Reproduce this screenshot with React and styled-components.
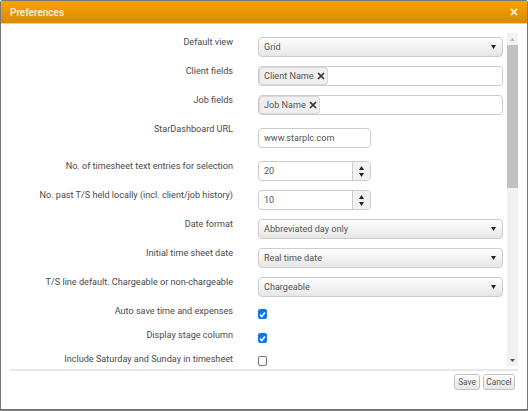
import React from "react";
import styled, { createGlobalStyle } from "styled-components";

const Global = createGlobalStyle`
  html, body { margin: 0; padding: 0; background: #fff; }
  body { width: 528px; height: 411px; overflow: hidden; font-family: Roboto, "Liberation Sans", sans-serif; }
  * { box-sizing: border-box; }
`;
const Dialog = styled.div`
  width: 528px; height: 411px; display: flex; flex-direction: column;
  background: #fff; border: 1px solid #777; border-bottom-width: 2px; border-radius: 3px 3px 0 0; overflow: hidden;
`;
const Title = styled.div`
  height: 23px; flex: none; display: flex; align-items: center; justify-content: space-between;
  padding: 0 9px; color: #fdf3e0; font-size: 10px; font-weight: 500;
  background: linear-gradient(#f8a200, #d98a00); border-bottom: 1px solid #d0d0d0;
`;
const Close = styled.svg`width: 8px; height: 8px; stroke: #fdecc8; stroke-width: 2; fill: none;`;
const Body = styled.div`
  height: 339px; flex: none; margin: 8px 9px 0 9px; display: flex; justify-content: space-between; align-items: flex-start;
  border-bottom: 2px solid #e8e8e8;
`;
const Form = styled.div`
  width: 493px; height: 335px; overflow: hidden; display: flex; flex-direction: column;
`;
const Row = styled.div`
  flex: none; height: ${p => p.$h}px; display: grid; grid-template-columns: 223px 1fr; column-gap: 25px;
  align-items: start; margin-top: ${p => p.$top || 0}px;
`;
const Label = styled.div`
  text-align: right; font-size: 9.1px; line-height: 10px; color: #4a4a4a; white-space: nowrap;
`;
const Select = styled.div`
  width: 245px; height: 20px; display: flex; align-items: center; justify-content: space-between;
  padding: 0 6px 0 5px; font-size: 9.1px; color: #555; border: 1px solid #ccc; border-radius: 4px;
  background: linear-gradient(#fff, #e6e6e6);
`;
const Caret = styled.svg`width: 5px; height: 4px; fill: #222; flex: none;`;
const TagBox = styled.div`
  width: 245px; height: 20px; display: flex; align-items: center; border: 1px solid #ccc; border-radius: 4px; background: #fff;
`;
const Tag = styled.div`
  height: 18px; display: flex; align-items: center; gap: 3px; padding: 0 3px 0 5px; font-size: 9.1px; color: #555;
  background: #efefef; border-radius: 4px; box-shadow: inset 0 0 0 1px #d8d8d8;
`;
const TagX = styled.svg`width: 8px; height: 8px; stroke: #333; stroke-width: 1.7; fill: none;`;
const TextBox = styled.div`
  width: 113px; height: 20px; margin-top: 4px; display: flex; align-items: center; padding: 0 5px; font-size: 9.1px; color: #555;
  border: 1px solid #ccc; border-radius: 4px; background: #fff;
`;
const Spin = styled.div`
  width: 113px; height: 20px; display: flex; border: 1px solid #ccc; border-radius: 4px; overflow: hidden; font-size: 9.1px; color: #555; background: #fff;
`;
const SpinValue = styled.div`flex: 1; display: flex; align-items: center; padding-left: 5px;`;
const SpinButtons = styled.div`
  width: 18px; display: flex; flex-direction: column; align-items: center; justify-content: center; gap: 3px;
  border-left: 1px solid #ccc; background: #f2f2f2;
`;
const Check = styled.div`
  width: 9px; height: 10px; margin-top: ${p => p.$top}px; border-radius: 2px; display: flex; align-items: center; justify-content: center;
  background: ${p => (p.$on ? "#0a76f0" : "#fff")}; border: 1px solid ${p => (p.$on ? "#0a76f0" : "#777")};
`;
const Tick = styled.svg`width: 7px; height: 7px; stroke: #fff; stroke-width: 1.6; fill: none;`;
const Track = styled.div`
  width: 11px; height: 333px; margin-top: 1px; flex: none; display: flex; flex-direction: column; align-items: center;
  background: #f1f1f1;
`;
const Arrow = styled.div`height: 12px; flex: none; display: flex; align-items: center; justify-content: center;`;
const ArrowIcon = styled.svg`width: 5px; height: 3px; fill: ${p => p.$c};`;
const Thumb = styled.div`width: 100%; height: 143px; flex: none; background: #c1c1c1;`;
const Gap = styled.div`flex: 1;`;
const Footer = styled.div`
  display: flex; justify-content: flex-end; gap: 3px; padding: 3px 12px 0 0;
`;
const Btn = styled.button`
  height: 16px; padding: 0; width: ${p => p.$w}px; font-family: inherit; font-size: 8.3px; color: #555;
  border: 1px solid #c4c4c4; border-radius: 3px; background: linear-gradient(#fff, #e6e6e6);
`;

const Down = () => <Caret viewBox="0 0 5 4"><path d="M0 0h5L2.5 4z" /></Caret>;
const DropSelect = ({ children }) => <Select>{children}<Down /></Select>;
const X = () => <TagX viewBox="0 0 8 8"><path d="M1 1l6 6M7 1L1 7" /></TagX>;
const Spinner = ({ value }) => (
  <Spin>
    <SpinValue>{value}</SpinValue>
    <SpinButtons>
      <Caret viewBox="0 0 5 4"><path d="M2.5 0L5 4H0z" /></Caret>
      <Down />
    </SpinButtons>
  </Spin>
);
const Checkbox = ({ on, top }) => (
  <Check $on={on} $top={top}>{on && <Tick viewBox="0 0 7 7"><path d="M1 3.7l1.8 1.8L6 1.5" /></Tick>}</Check>
);

export default function App() {
  return (
    <>
      <Global />
      <Dialog>
        <Title>
          <span>Preferences</span>
          <Close viewBox="0 0 8 8"><path d="M1 1l6 6M7 1L1 7" /></Close>
        </Title>
        <Body>
          <Form>
            <Row $h={29} $top={5}><Label>Default view</Label><DropSelect>Grid</DropSelect></Row>
            <Row $h={29}><Label>Client fields</Label><TagBox><Tag>Client Name <X /></Tag></TagBox></Row>
            <Row $h={29}><Label>Job fields</Label><TagBox><Tag>Job Name <X /></Tag></TagBox></Row>
            <Row $h={37}><Label>StarDashboard URL</Label><TextBox>www.starplc.com</TextBox></Row>
            <Row $h={29}><Label>No. of timesheet text entries for selection</Label><Spinner value="20" /></Row>
            <Row $h={29}><Label>No. past T/S held locally (incl. client/job history)</Label><Spinner value="10" /></Row>
            <Row $h={29}><Label>Date format</Label><DropSelect>Abbreviated day only</DropSelect></Row>
            <Row $h={29}><Label>Initial time sheet date</Label><DropSelect>Real time date</DropSelect></Row>
            <Row $h={29}><Label>T/S line default. Chargeable or non-chargeable</Label><DropSelect>Chargeable</DropSelect></Row>
            <Row $h={24}><Label>Auto save time and expenses</Label><Checkbox on top={3} /></Row>
            <Row $h={24}><Label>Display stage column</Label><Checkbox on top={3} /></Row>
            <Row $h={20}><Label>Include Saturday and Sunday in timesheet</Label><Checkbox top={2} /></Row>
          </Form>
          <Track>
            <Arrow><ArrowIcon $c="#bbb" viewBox="0 0 5 3"><path d="M2.5 0L5 3H0z" /></ArrowIcon></Arrow>
            <Thumb />
            <Gap />
            <Arrow><ArrowIcon $c="#555" viewBox="0 0 5 3"><path d="M0 0h5L2.5 3z" /></ArrowIcon></Arrow>
          </Track>
        </Body>
        <Footer>
          <Btn $w={26}>Save</Btn>
          <Btn $w={32}>Cancel</Btn>
        </Footer>
      </Dialog>
    </>
  );
}
